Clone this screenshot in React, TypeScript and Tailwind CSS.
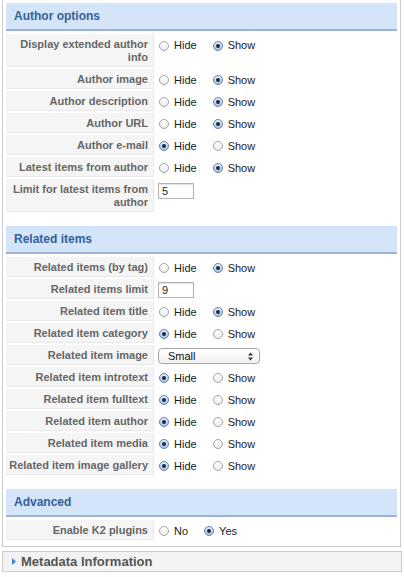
import React from 'react';

interface ParamRow {
  label: React.ReactNode;
  kind: 'radio' | 'text' | 'select';
  options?: string[];
  selected?: number;
  value?: string;
  tall?: boolean;
}

const authorRows: ParamRow[] = [
  { label: <>Display extended author<br />info</>, kind: 'radio', options: ['Hide', 'Show'], selected: 1, tall: true },
  { label: 'Author image', kind: 'radio', options: ['Hide', 'Show'], selected: 1 },
  { label: 'Author description', kind: 'radio', options: ['Hide', 'Show'], selected: 1 },
  { label: 'Author URL', kind: 'radio', options: ['Hide', 'Show'], selected: 1 },
  { label: 'Author e-mail', kind: 'radio', options: ['Hide', 'Show'], selected: 0 },
  { label: 'Latest items from author', kind: 'radio', options: ['Hide', 'Show'], selected: 1 },
  { label: <>Limit for latest items from<br />author</>, kind: 'text', value: '5', tall: true },
];

const relatedRows: ParamRow[] = [
  { label: 'Related items (by tag)', kind: 'radio', options: ['Hide', 'Show'], selected: 1 },
  { label: 'Related items limit', kind: 'text', value: '9' },
  { label: 'Related item title', kind: 'radio', options: ['Hide', 'Show'], selected: 1 },
  { label: 'Related item category', kind: 'radio', options: ['Hide', 'Show'], selected: 0 },
  { label: 'Related item image', kind: 'select', value: 'Small' },
  { label: 'Related item introtext', kind: 'radio', options: ['Hide', 'Show'], selected: 0 },
  { label: 'Related item fulltext', kind: 'radio', options: ['Hide', 'Show'], selected: 0 },
  { label: 'Related item author', kind: 'radio', options: ['Hide', 'Show'], selected: 0 },
  { label: 'Related item media', kind: 'radio', options: ['Hide', 'Show'], selected: 0 },
  { label: 'Related item image gallery', kind: 'radio', options: ['Hide', 'Show'], selected: 0 },
];

const advancedRows: ParamRow[] = [
  { label: 'Enable K2 plugins', kind: 'radio', options: ['No', 'Yes'], selected: 1 },
];

function Radio({ checked }: { checked: boolean }) {
  return checked ? (
    <span className="ml-[1px] flex h-[10px] w-[10px] shrink-0 items-center justify-center rounded-full border border-[#5f7fa8] bg-gradient-to-b from-[#e4eefa] to-[#a8c3e4]">
      <span className="h-[4px] w-[4px] rounded-full bg-[#1b2a40]"></span>
    </span>
  ) : (
    <span className="ml-[1px] h-[10px] w-[10px] shrink-0 rounded-full border border-[#a3a3a3] bg-gradient-to-b from-[#ffffff] to-[#ececec]"></span>
  );
}

function Value({ row }: { row: ParamRow }) {
  if (row.kind === 'text') {
    return (
      <input
        type="text"
        defaultValue={row.value}
        className="h-[16px] w-[36px] border border-[#b3b3b3] bg-white pl-[3px] text-[11px] leading-[14px] text-[#222] shadow-[inset_0_1px_1px_rgba(0,0,0,0.12)] outline-none"
      />
    );
  }
  if (row.kind === 'select') {
    return (
      <div className="flex h-[16px] w-[102px] items-center justify-between rounded-[4px] border border-[#a8a8a8] bg-gradient-to-b from-[#ffffff] to-[#f1f1f1] pl-[9px] pr-[6px] text-[11px] text-[#111]">
        <span>{row.value}</span>
        <svg width="5" height="9" viewBox="0 0 5 9">
          <path d="M2.5 0.5 L5 3.5 L0 3.5 Z" fill="#333" />
          <path d="M2.5 8.5 L5 5.5 L0 5.5 Z" fill="#333" />
        </svg>
      </div>
    );
  }
  return (
    <div className="flex items-center">
      {row.options!.map((opt, i) => (
        <div key={opt} className="mr-[15px] flex items-center">
          <Radio checked={row.selected === i} />
          <span className="ml-[5px] text-[11px] text-[#1a1a1a]">{opt}</span>
        </div>
      ))}
    </div>
  );
}

function Section({ title, rows, className }: { title: string; rows: ParamRow[]; className?: string }) {
  return (
    <div className={className}>
      <div className="flex h-[28px] items-center border-b-2 border-[#9cb4d2] bg-[#d4e5f9] pl-[8px] text-[12px] font-bold text-[#33609a]">
        {title}
      </div>
      <div className="mt-[3px] flex flex-col gap-[2px]">
        {rows.map((row, i) => (
          <div key={i} className="flex">
            <div className="w-[148px] shrink-0 whitespace-nowrap border-r border-b border-[#e9e9e9] bg-[#f5f5f5] pt-[4px] pb-[2px] pr-[5px] text-right text-[11px] font-bold leading-[13px] text-[#666]">
              {row.label}
            </div>
            <div className={`flex h-[20px] items-center pl-[4px] ${row.tall ? 'pt-[3px]' : 'pt-[2px]'}`}>
              <Value row={row} />
            </div>
          </div>
        ))}
      </div>
    </div>
  );
}

export default function App() {
  return (
    <div className="min-h-screen bg-white font-['Liberation_Sans',Arial,sans-serif]">
      {/* Params panel */}
      <div className="ml-[2px] mr-[3px] border-x border-b border-[#cccccc] px-[3px] pt-[3px] pb-[6px]">
        <Section title="Author options" rows={authorRows} />
        <Section title="Related items" rows={relatedRows} className="mt-[14px]" />
        <Section title="Advanced" rows={advancedRows} className="mt-[14px]" />
      </div>

      {/* Collapsed pane */}
      <div className="ml-[2px] mr-[2px] mt-[4px] flex h-[21px] items-center border border-[#cccccc] bg-[#f3f3f3] pl-[9px]">
        <svg width="4" height="7" viewBox="0 0 4 7" className="shrink-0">
          <path d="M0 0 L4 3.5 L0 7 Z" fill="#3b86d8" />
        </svg>
        <span className="ml-[5px] text-[13px] font-bold text-[#555]">Metadata Information</span>
      </div>
    </div>
  );
}
